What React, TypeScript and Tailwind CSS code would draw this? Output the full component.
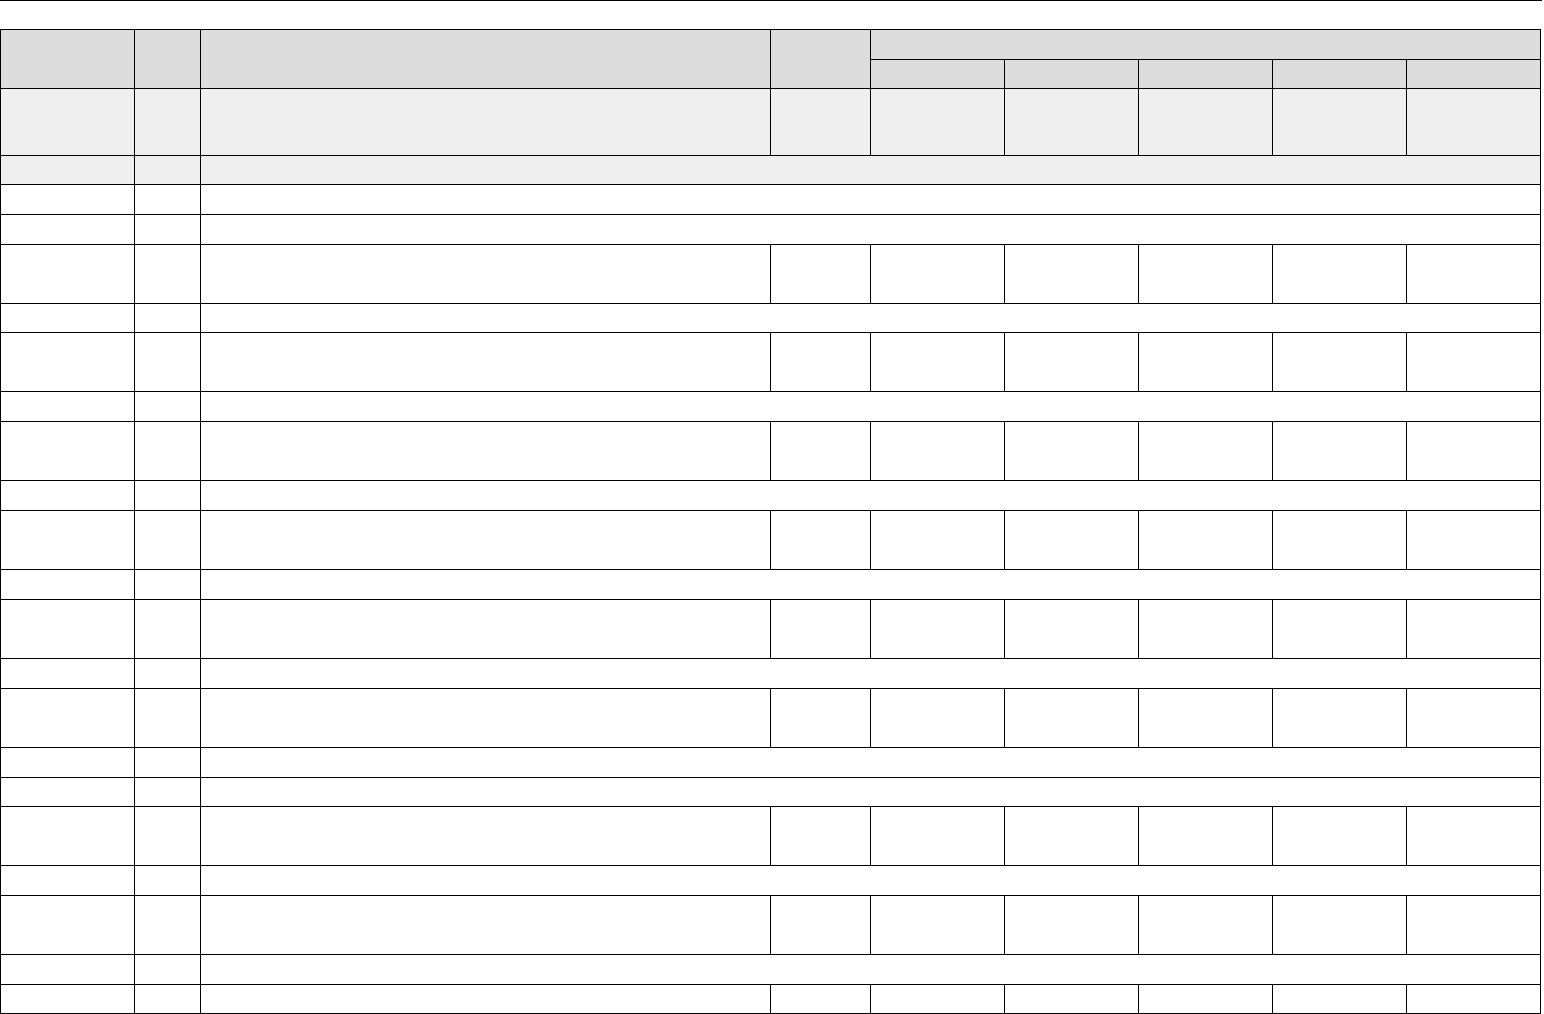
import React from "react";

type Row = { kind: "span" | "full"; h: number; bg?: string };

const rows: Row[] = [
  { kind: "span", h: 28, bg: "bg-[#efefef]" },
  { kind: "span", h: 29 },
  { kind: "span", h: 29 },
  { kind: "full", h: 58 },
  { kind: "span", h: 28 },
  { kind: "full", h: 58 },
  { kind: "span", h: 29 },
  { kind: "full", h: 58 },
  { kind: "span", h: 29 },
  { kind: "full", h: 58 },
  { kind: "span", h: 29 },
  { kind: "full", h: 58 },
  { kind: "span", h: 29 },
  { kind: "full", h: 58 },
  { kind: "span", h: 29 },
  { kind: "span", h: 28 },
  { kind: "full", h: 58 },
  { kind: "span", h: 29 },
  { kind: "full", h: 58 },
  { kind: "span", h: 29 },
  { kind: "full", h: 28 },
];

function Cell({ h, bg, className = "" }: { h: number; bg?: string; className?: string }) {
  return <div className={`${bg ?? "bg-white"} ${className}`} style={{ height: h }} />;
}

export default function App() {
  return (
    <div className="bg-white w-[1544px] h-[1014px] overflow-hidden font-['Liberation_Sans',sans-serif]">
      <div className="w-[1542px] border-t border-black" />
      <div className="mt-[28px] w-[1541px] bg-black p-px grid gap-px grid-cols-[133px_65px_569px_99px_133px_133px_133px_133px_133px]">
        {/* header */}
        <div className="bg-[#dcdcdc] row-span-2" />
        <div className="bg-[#dcdcdc] row-span-2" />
        <div className="bg-[#dcdcdc] row-span-2" />
        <div className="bg-[#dcdcdc] row-span-2" />
        <div className="bg-[#dcdcdc] col-span-5 h-[29px]" />
        <div className="bg-[#dcdcdc] h-[28px]" />
        <div className="bg-[#dcdcdc] h-[28px]" />
        <div className="bg-[#dcdcdc] h-[28px]" />
        <div className="bg-[#dcdcdc] h-[28px]" />
        <div className="bg-[#dcdcdc] h-[28px]" />
        {/* gray full row */}
        {Array.from({ length: 9 }).map((_, i) => (
          <Cell key={`g${i}`} h={66} bg="bg-[#efefef]" />
        ))}
        {rows.map((r, ri) =>
          r.kind === "span" ? (
            <React.Fragment key={ri}>
              <Cell h={r.h} bg={r.bg} />
              <Cell h={r.h} bg={r.bg} />
              <Cell h={r.h} bg={r.bg} className="col-span-7" />
            </React.Fragment>
          ) : (
            <React.Fragment key={ri}>
              {Array.from({ length: 9 }).map((_, i) => (
                <Cell key={i} h={r.h} bg={r.bg} />
              ))}
            </React.Fragment>
          )
        )}
      </div>
    </div>
  );
}
